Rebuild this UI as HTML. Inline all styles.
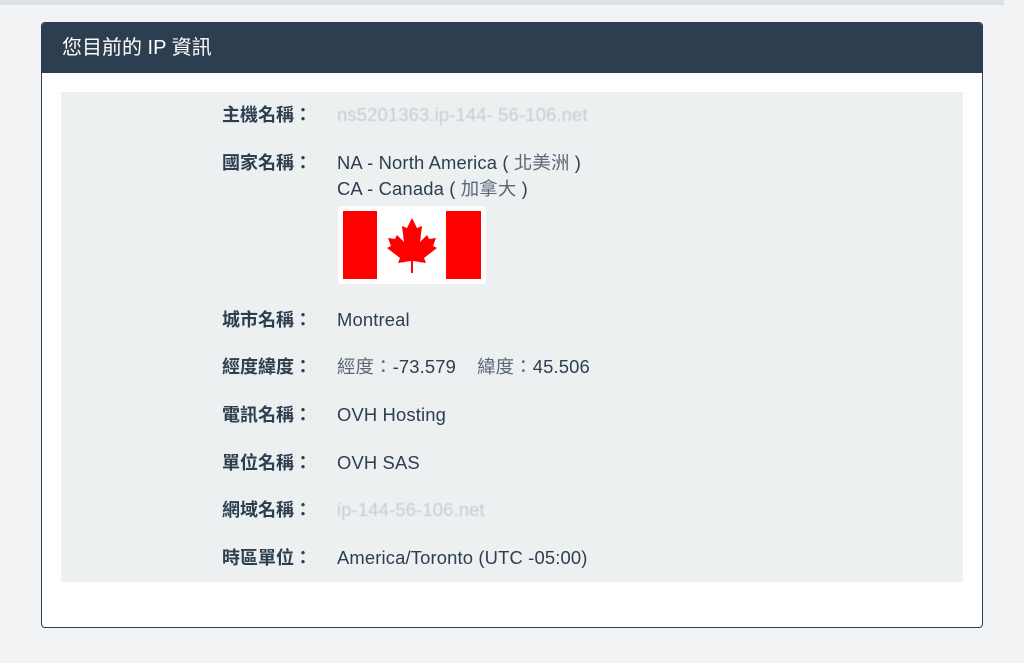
<!DOCTYPE html>
<html><head><meta charset="utf-8"><style>
body{margin:0;width:1024px;height:663px;background:#f2f3f4;font-family:"Liberation Sans","Noto Sans CJK TC",sans-serif;position:relative;overflow:hidden}
.top{position:absolute;left:0;top:0;width:1004px;height:5px;background:#dde1e5}
.panel{position:absolute;left:41px;top:22px;width:940px;height:604px;background:#fff;border:1px solid #2c3e50;border-radius:4px;overflow:hidden}
.head{height:50px;background:#2c3e50;color:#fff;font-size:20px;line-height:50px;padding-left:20px}
.box{position:absolute;left:19px;top:69px;width:902px;height:490px;background:#ecf0f1}
.row{position:absolute;left:0;font-size:18px;color:#2c3e50;line-height:26px}
.lab{position:absolute;left:161px;width:110px;font-weight:bold;white-space:nowrap}
.val{position:absolute;left:276px;white-space:nowrap;font-size:18.4px;letter-spacing:0.15px}
.blur{color:#c8ccd0;filter:blur(0.6px)}
.cj{color:#5a6878}
.flag{position:absolute;left:277px;top:114px;width:148px;height:78px;background:#fff;border-radius:3px}
</style></head><body>
<div class="top"></div>
<div class="panel">
<div class="head">您目前的 IP 資訊</div>
<div class="box">
<div class="row" style="top:10px"><span class="lab">主機名稱：</span><span class="val blur">ns5201363.ip-144-&nbsp;56-106.net</span></div>
<div class="row" style="top:58px"><span class="lab">國家名稱：</span><span class="val">NA - North America ( <span class="cj">北美洲</span> )<br>CA - Canada ( <span class="cj">加拿大</span> )</span></div>
<div class="flag"><svg width="148" height="78" viewBox="0 0 148 78">
<rect x="5" y="5" width="34" height="68" fill="#f00"/><rect x="108" y="5" width="35" height="68" fill="#f00"/>
<path fill="#f00" d="M74 12l-5 10-5-2 2 16-7-7-2 4-7-1 3 8-4 2 13 10-2 5 13-2v12h2V55l13 2-2-5 13-10-4-2 3-8-7 1-2-4-7 7 2-16-5 2z"/>
</svg></div>
<div class="row" style="top:215px"><span class="lab">城市名稱：</span><span class="val">Montreal</span></div>
<div class="row" style="top:262px"><span class="lab">經度緯度：</span><span class="val"><span class="cj">經度：</span>-73.579 &nbsp;&nbsp; <span class="cj">緯度：</span>45.506</span></div>
<div class="row" style="top:310px"><span class="lab">電訊名稱：</span><span class="val">OVH Hosting</span></div>
<div class="row" style="top:358px"><span class="lab">單位名稱：</span><span class="val">OVH SAS</span></div>
<div class="row" style="top:405px"><span class="lab">網域名稱：</span><span class="val blur">ip-144-56-106.net</span></div>
<div class="row" style="top:453px"><span class="lab">時區單位：</span><span class="val">America/Toronto (UTC -05:00)</span></div>
</div>
</div>
</body></html>
